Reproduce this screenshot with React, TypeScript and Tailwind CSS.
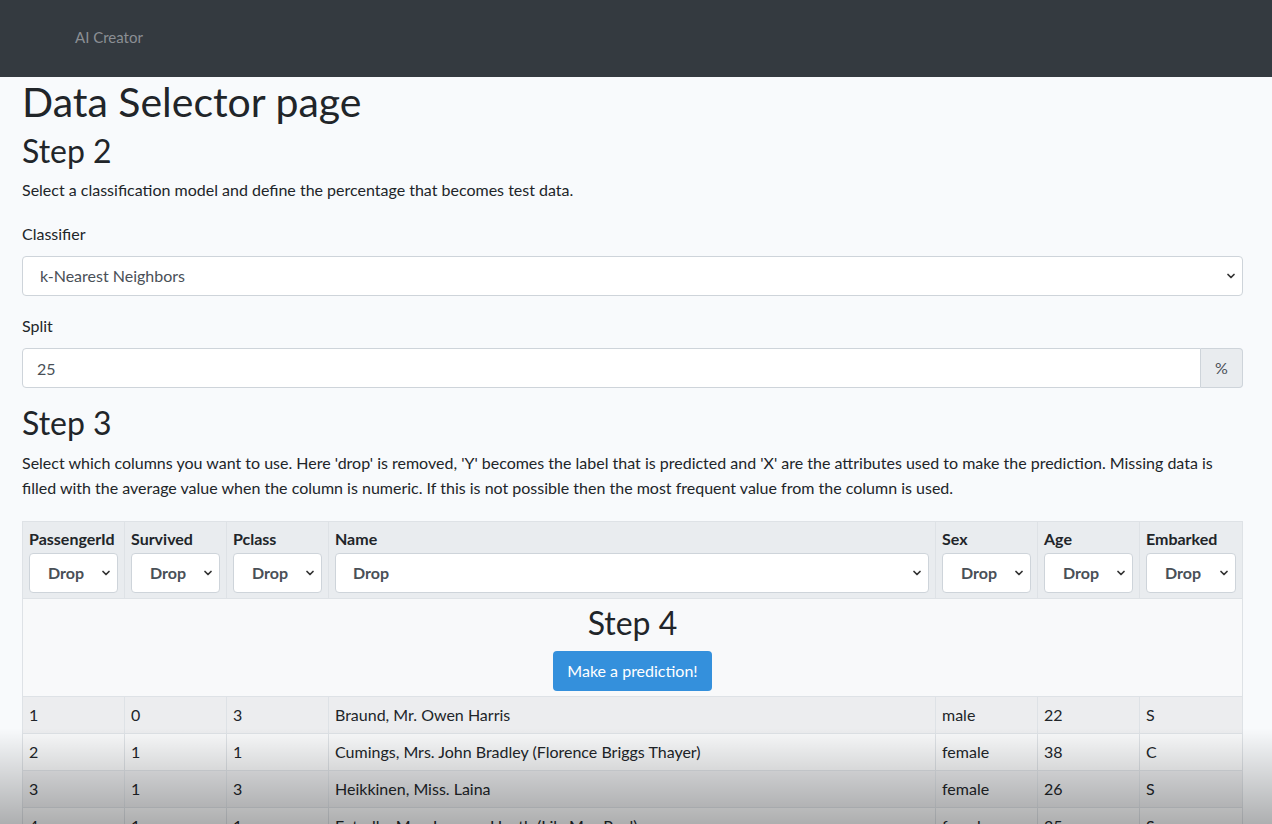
import { ChevronDown } from 'lucide-react'

const COLUNAS = ['PassengerId', 'Survived', 'Pclass', 'Name', 'Sex', 'Age', 'Embarked']

const LINHAS = [
  ['1', '0', '3', 'Braund, Mr. Owen Harris', 'male', '22', 'S'],
  ['2', '1', '1', 'Cumings, Mrs. John Bradley (Florence Briggs Thayer)', 'female', '38', 'C'],
  ['3', '1', '3', 'Heikkinen, Miss. Laina', 'female', '26', 'S'],
  ['4', '1', '1', 'Futrelle, Mrs. Jacques Heath (Lily May Peel)', 'female', '35', 'S'],
]

function Seletor({ valor, small }: { valor: string; small?: boolean }) {
  return (
    <div className="relative w-full">
      <select
        defaultValue={valor}
        className={`w-full h-10 appearance-none rounded-[4px] border border-[#ced4da] bg-white text-[16px] text-[#495057] outline-none ${small ? 'pl-[18px] pr-6' : 'pl-[17px] pr-8'}`}
      >
        <option>{valor}</option>
      </select>
      <ChevronDown
        className="pointer-events-none absolute top-1/2 -translate-y-1/2 right-[6px] w-[12px] h-[12px] text-[#333]"
        strokeWidth={3.5}
      />
    </div>
  )
}

export default function App() {
  return (
    <div className="relative min-h-[824px] bg-[#f8fafc] text-[#212529]" style={{ fontFamily: 'Lato, "Noto Sans", sans-serif' }}>
      {/* Navbar */}
      <nav className="h-[77px] bg-[#343a40] flex items-center pl-[75px] pb-[2px]">
        <span className="text-[15px] text-[#8b8f94]">AI Creator</span>
      </nav>

      <div className="pl-[22px] pr-[29px]">
        <h1 className="text-[41px] leading-[48px] mt-[1px] mb-[6px]">Data Selector page</h1>

        <h2 className="text-[32px] leading-[38px] mb-[8px]">Step 2</h2>
        <p className="text-[16px] leading-6 mb-[20px]">Select a classification model and define the percentage that becomes test data.</p>

        <label className="block text-[16px] leading-6 mb-[10px]">Classifier</label>
        <Seletor valor="k-Nearest Neighbors" />

        <label className="block text-[16px] leading-6 mt-[18px] mb-[10px]">Split</label>
        <div className="flex h-10">
          <input
            defaultValue="25"
            className="flex-1 min-w-0 h-10 rounded-l-[4px] border border-[#ced4da] bg-white pl-[14px] text-[16px] text-[#495057] outline-none"
          />
          <span className="w-[42px] flex items-center justify-center rounded-r-[4px] border border-l-0 border-[#ced4da] bg-[#e9ecef] text-[16px] text-[#495057]">%</span>
        </div>

        <h2 className="text-[32px] leading-[38px] mt-[16px] mb-[8px]">Step 3</h2>
        <p className="text-[16px] leading-[25px] mb-[21px]">
          Select which columns you want to use. Here 'drop' is removed, 'Y' becomes the label that is predicted and 'X' are the attributes used to make the prediction. Missing data is filled with the average value when the column is numeric. If this is not possible then the most frequent value from the column is used.
        </p>

        <table className="w-full border-collapse table-fixed">
          <colgroup>
            <col className="w-[102px]" />
            <col className="w-[102px]" />
            <col className="w-[102px]" />
            <col />
            <col className="w-[102px]" />
            <col className="w-[102px]" />
            <col className="w-[103px]" />
          </colgroup>
          <thead>
            <tr className="bg-[#e9ecef]">
              {COLUNAS.map(c => (
                <th key={c} className="border border-[#dee2e6] px-[6px] pt-[6px] pb-[5px] text-left align-top">
                  <div className="text-[16px] leading-[22px] font-bold mb-[3px]">{c}</div>
                  <Seletor valor="Drop" small={c !== 'Name'} />
                </th>
              ))}
            </tr>
          </thead>
          <tbody>
            <tr className="bg-[#f8f9fa]">
              <td colSpan={7} className="border border-[#dee2e6] text-center pt-[4px] pb-[5px]">
                <h2 className="text-[32px] leading-[40px] mb-[8px]">Step 4</h2>
                <button className="h-10 px-[14px] rounded-[4px] bg-[#3490dc] text-white text-[16px]">Make a prediction!</button>
              </td>
            </tr>
            {LINHAS.map((l, i) => (
              <tr key={i} className={i % 2 === 0 ? 'bg-[#ecedef]' : 'bg-[#f8f9fa]'}>
                {l.map((v, j) => (
                  <td key={j} className="border border-[#dee2e6] px-[6px] h-[37px] text-[16px] leading-6">{v}</td>
                ))}
              </tr>
            ))}
          </tbody>
        </table>
      </div>

      {/* sombra inferior sobre o conteúdo */}
      <div className="pointer-events-none absolute left-0 right-0 top-[728px] h-[96px] bg-gradient-to-b from-transparent to-black/30" />
    </div>
  )
}
